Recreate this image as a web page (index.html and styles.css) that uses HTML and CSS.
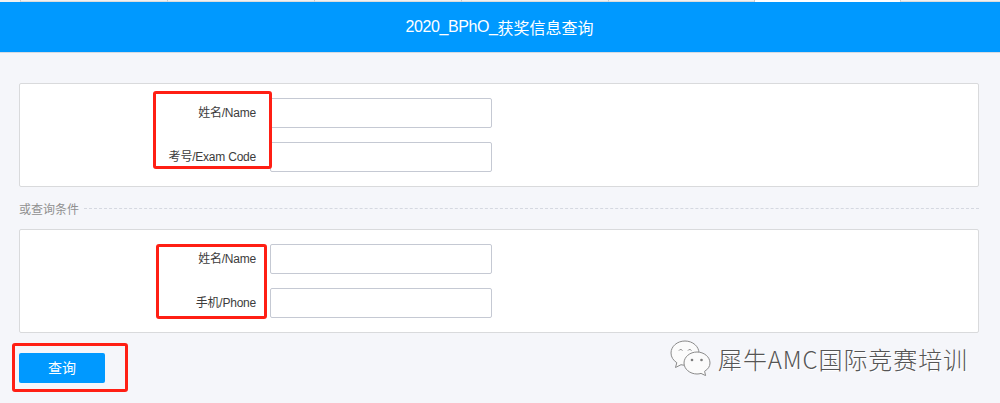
FILE: index.html
```html
<!DOCTYPE html>
<html lang="zh">
<head>
<meta charset="utf-8">
<title>2020_BPhO_获奖信息查询</title>
<link rel="stylesheet" href="styles.css">
</head>
<body>
<div class="tabs">
  <span class="tab"></span><span class="tab"></span><span class="tab"></span><span class="tab"></span><span class="tab tab-narrow"></span><span class="tab tab-narrow tab-active"></span><span class="tab tab-narrow"></span>
</div>
<header class="banner"><span class="latin">2020_BPhO_</span>获奖信息查询</header>
<main class="content">
  <section class="card">
    <div class="row"><label class="label">姓名/Name</label><input class="field" type="text"></div>
    <div class="row"><label class="label">考号/Exam Code</label><input class="field" type="text"></div>
    <span class="mark mark-a"></span>
  </section>
  <div class="divider"><span class="divider-text">或查询条件</span><span class="divider-line"></span></div>
  <section class="card">
    <div class="row"><label class="label">姓名/Name</label><input class="field" type="text"></div>
    <div class="row"><label class="label">手机/Phone</label><input class="field" type="text"></div>
    <span class="mark mark-b"></span>
  </section>
  <div class="actions">
    <button class="submit" type="button">查询</button>
    <span class="mark mark-c"></span>
  </div>
</main>
<div class="watermark">
  <svg class="wechat" width="41" height="36" viewBox="0 0 41 36" aria-hidden="true">
    <path class="bubble" d="M15 1C7.300 1 1 6.300 1 13c0 4 2.300 7.400 5.800 9.700L5.500 27.500l5.500-2.800c1.300.3 2.600.5 4 .5 7.700 0 14-5.400 14-12.100S22.700 1 15 1z"/>
    <path class="eye" d="M9 10.500a2 2 0 0 1 3.400 0M18 10.500a2 2 0 0 1 3.400 0"/>
    <path class="bubble" d="M27 12c-7 0-13 4.900-13 11s6 11 13 11c1.400 0 2.700-.2 4-.6l4.600 2.200-1-4.300c3.300-2 5.400-4.800 5.400-8.300 0-6.100-6-11-13-11z"/>
    <circle class="eye-dot" cx="22" cy="20" r="1.300"/><circle class="eye-dot" cx="31.500" cy="20" r="1.300"/>
  </svg>
  <span class="watermark-text">犀牛AMC国际竞赛培训</span>
</div>
</body>
</html>
```
FILE: styles.css
```css
* { box-sizing: border-box; }
html, body { margin: 0; height: 403px; overflow: hidden; }
body { position: relative; background: #f5f6fa; font-family: "Liberation Sans", "Noto Sans CJK SC", sans-serif; color: #333; }
.tabs { display: flex; height: 2px; background: #f1f1f1; padding-left: 20px; }
.tab { flex: none; width: 147px; border-left: 1px solid #c9c9c9; border-bottom: 1px solid #dcdcdc; }
.tab-narrow { width: 146px; }
.tab-active { background: #fff; border-bottom: 0; }
.banner { height: 51px; background: #0099ff; color: #fff; font-size: 16px; display: flex; align-items: center; justify-content: center; border-bottom: 1px solid #d5dbe3; padding: 0 1px 1px 0; }
.latin { letter-spacing: -0.4px; }
.content { padding: 30px 21px 0 19px; }
.card { position: relative; height: 104px; background: #fff; border: 1px solid #d9dadc; border-radius: 2px; padding: 14px 0 0; display: flex; flex-direction: column; gap: 14px; }
.row { display: flex; height: 30px; }
.label { width: 236px; height: 30px; padding-top: 1px; line-height: 28px; text-align: right; font-size: 12px; color: #3c3c3c; letter-spacing: -0.22px; }
.field { width: 222px; height: 30px; margin-left: 14px; background: #fff; border: 1px solid #c5c9d3; border-radius: 2px; }
.divider { display: flex; align-items: center; height: 12px; margin: 15px 0; gap: 5px; }
.divider-text { font-size: 12px; color: #909090; white-space: nowrap; }
.divider-line { flex: 1; border-top: 1px dashed #d5d8e0; }
.actions { position: relative; margin-top: 20px; }
.submit { display: block; width: 86px; height: 30px; background: #0099ff; color: #fff; font: 14px "Liberation Sans", "Noto Sans CJK SC", sans-serif; border: 0; border-radius: 2px; padding: 0 0 2px; }
.mark { position: absolute; border: 3px solid #ff1f14; border-radius: 3px; }
.mark-a { left: 133px; top: 7px; width: 119px; height: 78px; }
.mark-b { left: 136px; top: 14px; width: 111px; height: 75px; }
.mark-c { left: -7px; top: -10px; width: 116px; height: 49px; }
.watermark { position: absolute; left: 670px; top: 340px; display: flex; align-items: center; gap: 7px; }
.wechat { display: block; }
.bubble { fill: #fbfbfb; stroke: #8a8a8a; stroke-width: 1; }
.eye { fill: none; stroke: #7c7c7c; stroke-width: 1; }
.eye-dot { fill: #7c7c7c; }
.watermark-text { font-size: 24px; letter-spacing: 0.9px; color: #555; font-family: "Noto Sans CJK SC", sans-serif; font-weight: 300; text-shadow: 1px 1px 0 #fff; white-space: nowrap; }
```
